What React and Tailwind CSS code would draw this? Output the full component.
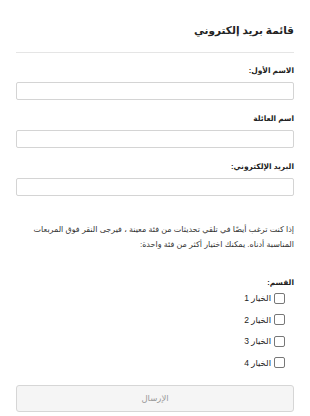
const fields = [
  { label: 'الاسم الأول:', id: 'fname' },
  { label: 'اسم العائلة', id: 'lname' },
  { label: 'البريد الإلكتروني:', id: 'email' },
];

const options = ['الخيار 1', 'الخيار 2', 'الخيار 3', 'الخيار 4'];

export default function App() {
  return (
    <div
      dir="rtl"
      className="min-h-screen bg-white px-[16px] text-[#222]"
      style={{ fontFamily: '"Liberation Sans", "DejaVu Sans", sans-serif' }}
    >
      <h2 className="pt-[23px] pb-[15px] text-[10.5px] font-bold leading-[14px] text-[#222]">
        قائمة بريد إلكتروني
      </h2>
      <hr className="border-0 border-t border-[#e5e5e5]" />

      <div className="mt-[12px] flex flex-col">
        {fields.map((f) => (
          <div key={f.id} className="mb-[13px] flex flex-col">
            <label htmlFor={f.id} className="mb-[6px] text-[7.5px] font-bold leading-[11px]">
              {f.label}
            </label>
            <input
              id={f.id}
              type="text"
              className="h-[18px] w-full rounded-[2px] border border-[#d4d4d4] bg-white"
            />
          </div>
        ))}
      </div>

      <p className="mt-[13px] text-[8px] leading-[15px] text-[#333]">
        إذا كنت ترغب أيضًا في تلقي تحديثات من فئة معينة ، فيرجى النقر فوق المربعات المناسبة أدناه. يمكنك اختيار أكثر من فئة واحدة:
      </p>

      <div className="mt-[25px] text-[7.5px] font-bold leading-[11px]">القسم:</div>
      <div className="mt-[4px] flex flex-col gap-[9.5px] pr-[9px]">
        {options.map((o) => (
          <label key={o} className="flex items-center gap-[3px] text-[8.5px] leading-[12px] text-[#222]">
            <span className="inline-block h-[11px] w-[11px] rounded-[2px] border border-[#777] bg-white" />
            {o}
          </label>
        ))}
      </div>

      <button className="mt-[16px] h-[27px] w-full rounded-[3px] border border-[#d6d6d6] bg-[#f5f5f5] text-[8.5px] text-[#999]">
        الإرسال
      </button>
    </div>
  );
}
